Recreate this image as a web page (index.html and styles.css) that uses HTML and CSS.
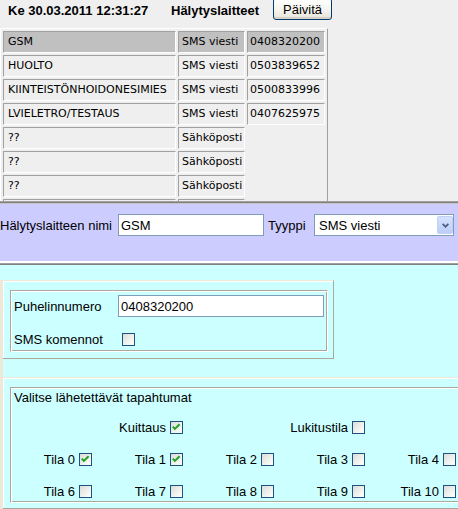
FILE: index.html
```html
<!DOCTYPE html>
<html lang="fi">
<head>
<meta charset="utf-8">
<title>Hälytyslaitteet</title>
<link rel="stylesheet" href="styles.css">
</head>
<body>
<div class="top">
  <div class="hdr">
    <b class="date">Ke 30.03.2011 12:31:27</b>
    <b class="title">Hälytyslaitteet</b>
    <button class="btn" type="button">Päivitä</button>
  </div>
  <table class="list">
    <tr class="row-on"><td class="c1">GSM</td><td class="c2">SMS viesti</td><td class="c3">0408320200</td></tr>
    <tr><td class="c1">HUOLTO</td><td class="c2">SMS viesti</td><td class="c3">0503839652</td></tr>
    <tr><td class="c1">KIINTEISTÖNHOIDONESIMIES</td><td class="c2">SMS viesti</td><td class="c3">0500833996</td></tr>
    <tr><td class="c1">LVIELETRO/TESTAUS</td><td class="c2">SMS viesti</td><td class="c3">0407625975</td></tr>
    <tr><td class="c1">??</td><td class="c2">Sähköposti</td><td class="c3"></td></tr>
    <tr><td class="c1">??</td><td class="c2">Sähköposti</td><td class="c3"></td></tr>
    <tr><td class="c1">??</td><td class="c2">Sähköposti</td><td class="c3"></td></tr>
    <tr><td class="c1">&nbsp;</td><td class="c2">&nbsp;</td><td class="c3"></td></tr>
  </table>
</div>
<div class="split split-a"></div>
<div class="mid">
  <div class="mid-row">
    <span class="lab">Hälytyslaitteen nimi</span>
    <input class="txt" type="text" value="GSM">
    <span class="lab lab-t">Tyyppi</span>
    <span class="selwrap">
      <select class="dropdown"><option>SMS viesti</option><option>Sähköposti</option></select>
      <span class="arr"><svg width="7" height="5" viewBox="0 0 7 5"><path d="M0.6 0.8 L3.5 3.7 L6.4 0.8" fill="none" stroke="#4d6185" stroke-width="1.7"/></svg></span>
    </span>
  </div>
</div>
<div class="split split-b"></div>
<div class="bottom">
  <div class="panel">
    <div class="box box1">
      <div class="fs fs1">
        <div class="form-grid">
          <span class="lab">Puhelinnumero</span>
          <input class="txt" type="text" value="0408320200">
          <span class="lab">SMS komennot</span>
          <span class="cbcell"><span class="cb"></span></span>
        </div>
      </div>
    </div>
    <div class="box box2">
      <div class="fs fs2">
        <div class="fs-title">Valitse lähetettävät tapahtumat</div>
        <div class="ev-grid">
          <span class="ck col2">Kuittaus <span class="cb on"><svg width="11" height="11" viewBox="0 0 11 11"><polyline points="1.8,4.6 3.9,6.9 8.6,2.2" fill="none" stroke="#21a121" stroke-width="2"/></svg></span></span>
          <span class="ck col4">Lukitustila <span class="cb"></span></span>
          <span class="ck col1">Tila 0 <span class="cb on"><svg width="11" height="11" viewBox="0 0 11 11"><polyline points="1.8,4.6 3.9,6.9 8.6,2.2" fill="none" stroke="#21a121" stroke-width="2"/></svg></span></span>
          <span class="ck">Tila 1 <span class="cb on"><svg width="11" height="11" viewBox="0 0 11 11"><polyline points="1.8,4.6 3.9,6.9 8.6,2.2" fill="none" stroke="#21a121" stroke-width="2"/></svg></span></span>
          <span class="ck">Tila 2 <span class="cb"></span></span>
          <span class="ck">Tila 3 <span class="cb"></span></span>
          <span class="ck">Tila 4 <span class="cb"></span></span>
          <span class="ck col1">Tila 6 <span class="cb"></span></span>
          <span class="ck">Tila 7 <span class="cb"></span></span>
          <span class="ck">Tila 8 <span class="cb"></span></span>
          <span class="ck">Tila 9 <span class="cb"></span></span>
          <span class="ck">Tila 10 <span class="cb"></span></span>
        </div>
      </div>
    </div>
  </div>
</div>
</body>
</html>
```

FILE: styles.css
```css
* { box-sizing: border-box; }
html, body { margin: 0; padding: 0; }
body {
  width: 458px;
  height: 509px;
  overflow: hidden;
  background: #ccffff;
  color: #000;
  font-family: "Liberation Sans", Arial, sans-serif;
  font-size: 13px;
}

/* ---------- top frame ---------- */
.top {
  height: 201px;
  background: #efefef;
  overflow: hidden;
}
.hdr {
  display: grid;
  grid-template-columns: 163px 102px 59px;
  height: 19px;
  align-items: center;
  padding-left: 8px;
}
.hdr b { font-weight: bold; font-size: 13px; line-height: 15px; white-space: nowrap; }
.btn {
  align-self: start;
  margin-top: -2px;
  width: 59px;
  height: 22px;
  padding: 0;
  border: 1px solid #003c74;
  border-radius: 3px;
  background: linear-gradient(#ffffff, #f5f4ef 55%, #e6e3d8);
  box-shadow: inset 0 -2px 0 #d8d2c6;
  font-family: "Liberation Sans", Arial, sans-serif;
  font-size: 13px;
  color: #000;
}

.list {
  margin-top: 9px;
  border-collapse: separate;
  border-spacing: 2px;
  border: 1px solid;
  border-color: #ffffff #a0a0a0 #a0a0a0 #ffffff;
  empty-cells: hide;
  table-layout: fixed;
  font-family: "DejaVu Sans", Verdana, sans-serif;
  font-size: 11px;
}
.list td {
  border: 1px solid;
  border-color: #a0a0a0 #ffffff #ffffff #a0a0a0;
  padding: 0;
  line-height: 20px;
  white-space: nowrap;
  overflow: hidden;
}
.list .c1 { width: 173px; padding-left: 4px; }
.list .c2 { width: 67px; padding-left: 3px; }
.list .c3 { width: 78px; padding-left: 2px; }
.list .row-on td { background: #c0c0c0; }

/* ---------- frame splitters ---------- */
.split-a {
  height: 3px;
  background: linear-gradient(#a0a0a0 0 1px, #808080 1px 2px, #c4c4c4 2px 3px);
}
.split-b {
  height: 4px;
  background: linear-gradient(#ffffff 0 2px, #a0a0a0 2px 3px, #808080 3px 4px);
}

/* ---------- middle frame ---------- */
.mid {
  height: 57px;
  background: #ccccff;
  padding-top: 10px;
}
.mid-row {
  display: grid;
  grid-template-columns: 118px 146px 50px 140px;
  align-items: center;
  height: 22px;
}
.lab { white-space: nowrap; }
.lab-t { padding-left: 4px; }
.txt {
  width: 100%;
  height: 22px;
  border: 1px solid #7f9db9;
  padding: 0 2px;
  background: #fff;
  font-family: "Liberation Sans", Arial, sans-serif;
  font-size: 13px;
  color: #000;
  outline: none;
}
.selwrap { position: relative; display: block; height: 22px; }
.dropdown {
  -webkit-appearance: none;
  appearance: none;
  display: block;
  width: 140px;
  height: 22px;
  border: 1px solid #7f9db9;
  border-radius: 0;
  padding: 0 0 0 4px;
  background: #fff;
  font-family: "Liberation Sans", Arial, sans-serif;
  font-size: 13px;
  color: #000;
}
.arr {
  position: absolute;
  right: 1px;
  top: 2px;
  width: 16px;
  height: 18px;
  border: 1px solid #bdd0f8;
  border-radius: 2px;
  background: linear-gradient(#d6e2fd, #bccdf8);
  display: flex;
  align-items: center;
  justify-content: center;
  pointer-events: none;
}
.arr svg { display: block; }

/* ---------- bottom frame ---------- */
.bottom {
  height: 244px;
  padding-top: 15px;
}
.panel {
  border-left: 3px solid #ece9d8;
  height: 229px;
  overflow: hidden;
}
.box {
  border-top: 1px solid #ece9d8;
  border-right: 1px solid #aca899;
  border-bottom: 1px solid #aca899;
  box-shadow: inset 1px 1px 0 #ffffff;
}
.box1 {
  width: max-content;
  padding: 9px 5px 6px 7px;
}
.box2 {
  margin-top: 18px;
  width: 520px;
  padding: 9px 0 5px 7px;
}
.fs {
  border: 1px solid;
  border-color: #aca899 #ffffff #ffffff #aca899;
  box-shadow: inset 1px 1px 0 #ffffff, inset -1px -1px 0 #aca899;
  padding: 1px;
}
.fs1 { width: 318px; height: 62px; }
.form-grid {
  display: grid;
  grid-template-columns: 104px 206px;
  grid-template-rows: 22px 22px;
  row-gap: 11px;
  align-items: center;
  padding: 3px 0 0 2px;
}
.cbcell { display: flex; align-items: center; padding-left: 4px; }

.fs2 { width: 500px; height: 116px; }
.fs-title {
  line-height: 16px;
  margin: 1px 0 11px 2px;
}
.ev-grid {
  display: grid;
  grid-template-columns: 80px repeat(4, 91px);
  grid-auto-rows: 20px;
  row-gap: 12px;
  align-items: center;
}
.ck {
  justify-self: end;
  display: flex;
  align-items: center;
  gap: 4px;
  white-space: nowrap;
}
.ck.col1 { grid-column: 1; }
.ck.col2 { grid-column: 2; }
.ck.col4 { grid-column: 4; }

.cb {
  display: inline-block;
  flex: none;
  width: 13px;
  height: 13px;
  border: 1px solid #1c5180;
  background: linear-gradient(135deg, #dcdcd7 0%, #f2f2ef 60%, #ffffff 100%);
}
.cb svg { display: block; }
```
